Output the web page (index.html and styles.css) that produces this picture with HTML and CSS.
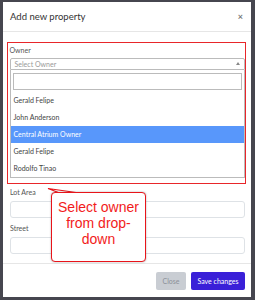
FILE: index.html
```html
<!DOCTYPE html>
<html>
<head>
<meta charset="utf-8">
<link rel="stylesheet" href="styles.css">
</head>
<body>
<div class="modal">
  <div class="modal-header">
    <h5 class="modal-title">Add new property</h5>
    <span class="close">&times;</span>
  </div>
  <div class="modal-body">
    <div class="owner-group">
      <label class="lbl">Owner</label>
      <div class="select">
        <span class="placeholder">Select Owner</span>
        <span class="arrow"></span>
      </div>
      <div class="dropdown">
        <div class="search"><div class="search-input"></div></div>
        <ul class="options">
          <li>Gerald Felipe</li>
          <li>John Anderson</li>
          <li class="active">Central Atrium Owner</li>
          <li>Gerald Felipe</li>
          <li>Rodolfo Tinao</li>
        </ul>
      </div>
    </div>
    <div class="field">
      <label class="lbl">Lot Area</label>
      <div class="input"></div>
    </div>
    <div class="field">
      <label class="lbl">Street</label>
      <div class="input"></div>
    </div>
  </div>
  <div class="modal-footer">
    <button class="btn btn-close">Close</button>
    <button class="btn btn-save">Save changes</button>
  </div>
  <svg class="pointer" width="40" height="8" viewBox="0 0 40 8">
    <path d="M14 6.5 L1 1.5 L36 6.5" fill="#fff" stroke="#e8141a" stroke-width="1.2"/>
  </svg>
  <div class="callout">Select owner from drop-down</div>
</div>
</body>
</html>
```
FILE: styles.css
```css
html, body {
  margin: 0;
  padding: 0;
}
body {
  background: #46464f;
  width: 255px;
  height: 300px;
  overflow: hidden;
  padding-top: 2px;
  box-sizing: border-box;
  font-family: Lato, "Open Sans", sans-serif;
}
.modal {
  position: relative;
  margin-left: 3px;
  width: 248px;
  height: 295px;
  background: #fff;
  display: flex;
  flex-direction: column;
}
.modal-header {
  height: 29px;
  border-bottom: 1px solid #e6e6e6;
  display: flex;
  align-items: center;
  justify-content: space-between;
  padding: 0 8px 0 7px;
}
.modal-title {
  margin: 0;
  font-size: 9.5px;
  font-weight: 400;
  color: #333;
}
.close {
  font-size: 9px;
  color: #777;
  font-weight: 700;
}
.modal-body {
  padding: 10px 5px 8px 4px;
  flex: 1;
}
.owner-group {
  border: 1.5px solid #e8262a;
  padding: 1.5px 0.5px 5px 1.5px;
}
.lbl {
  display: block;
  font-size: 7px;
  line-height: 10px;
  color: #555;
  margin-bottom: 3px;
}
.select {
  height: 12px;
  border: 1px solid #bbb;
  border-radius: 2px 2px 0 0;
  box-sizing: border-box;
  display: flex;
  align-items: center;
  justify-content: space-between;
  padding: 0 4px 0 4px;
}
.placeholder {
  font-size: 7px;
  color: #999;
}
.arrow {
  width: 0;
  height: 0;
  border-left: 2px solid transparent;
  border-right: 2px solid transparent;
  border-bottom: 3px solid #888;
}
.dropdown {
  border: 1px solid #bbb;
  border-top: none;
}
.search {
  padding: 3px 2px 2px 2px;
}
.search-input {
  height: 17px;
  border: 1px solid #bbb;
  box-sizing: border-box;
}
.options {
  list-style: none;
  margin: 0;
  padding: 0;
}
.options li {
  height: 17px;
  line-height: 17px;
  font-size: 7px;
  color: #444;
  padding-left: 3px;
}
.options li.active {
  background: #5897fb;
  color: #fff;
}
.field {
  margin: 3px 1px 0 3px;
}
.field + .field {
  margin-top: 5px;
}
.field .lbl {
  margin-bottom: 4px;
}
.input {
  height: 17px;
  border: 1px solid #dee2e6;
  border-radius: 3px;
  box-sizing: border-box;
}
.modal-footer {
  border-top: 1px solid #e6e6e6;
  padding: 8px 6px 7px 0;
  display: flex;
  justify-content: flex-end;
  gap: 5px;
}
.btn {
  height: 18px;
  border: none;
  border-radius: 2px;
  font-family: Lato, sans-serif;
  font-size: 7px;
  padding: 0;
}
.btn-close {
  width: 30px;
  background: #c9cdd3;
  color: #8b9099;
}
.btn-save {
  width: 54px;
  background: #3a20d8;
  color: #fff;
}
.pointer {
  position: absolute;
  left: 44px;
  top: 185px;
}
.callout {
  position: absolute;
  left: 48px;
  top: 190px;
  width: 95px;
  height: 70px;
  box-sizing: border-box;
  border: 1.5px solid #e8141a;
  border-radius: 4px;
  background: #fff;
  box-shadow: 0 0 2px rgba(0,0,0,0.35);
  color: #f21b1b;
  font-family: "Liberation Sans", Arial, sans-serif;
  font-size: 14px;
  line-height: 16px;
  text-align: center;
  padding: 6px 4px 0 4px;
}
```
